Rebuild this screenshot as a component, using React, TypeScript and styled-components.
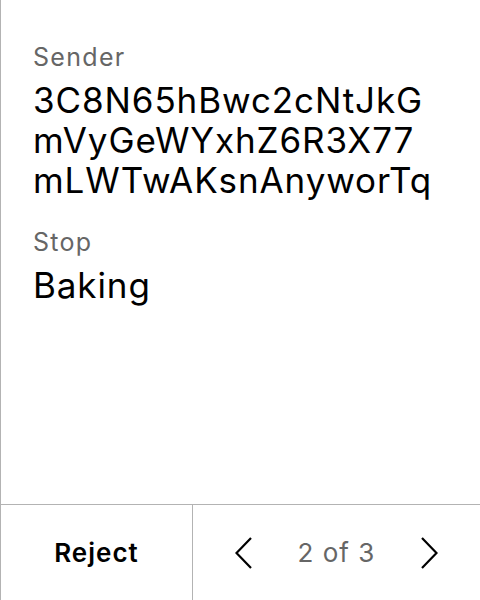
import React from "react";
import styled, { createGlobalStyle } from "styled-components";

const Global = createGlobalStyle`
  html, body { margin: 0; padding: 0; background: #fff; }
  body { font-family: Inter, "Noto Sans", sans-serif; }
`;

const Frame = styled.div`
  box-sizing: border-box;
  width: 480px;
  height: 600px;
  border-left: 1px solid #b3b3b3;
  display: flex;
  flex-direction: column;
`;

const Content = styled.div`
  flex: 1;
  padding: 41px 32px 0 32px;
  display: flex;
  flex-direction: column;
  gap: 26px;
`;

const Field = styled.div`
  display: flex;
  flex-direction: column;
  gap: 7px;
`;

const Label = styled.div`
  font-size: 25px;
  line-height: 32px;
  letter-spacing: 1.3px;
  color: #666;
`;

const Value = styled.div`
  font-size: 35px;
  line-height: 40px;
  letter-spacing: 0.9px;
  color: #000;
  white-space: nowrap;
`;

const Footer = styled.div`
  height: 96px;
  border-top: 1px solid #b3b3b3;
  display: flex;
  box-sizing: border-box;
`;

const RejectButton = styled.button`
  width: 192px;
  border: none;
  border-right: 1px solid #b3b3b3;
  background: none;
  font-family: inherit;
  font-size: 26px;
  font-weight: 600;
  letter-spacing: 1px;
  color: #000;
  padding: 0;
`;

const Pager = styled.div`
  flex: 1;
  display: flex;
  align-items: center;
  justify-content: space-between;
  padding: 0 42px;
`;

const NavButton = styled.button`
  border: none;
  background: none;
  padding: 0;
  width: 17px;
  height: 32px;
  display: flex;
  align-items: center;
  justify-content: center;
`;

const PageText = styled.span`
  font-size: 26px;
  letter-spacing: 1px;
  color: #666;
`;

const Chevron = ({ dir }: { dir: "left" | "right" }) => (
  <svg width="17" height="32" viewBox="0 0 17 32" fill="none">
    <path
      d={dir === "left" ? "M16 1 L1.5 16 L16 31" : "M1 1 L15.5 16 L1 31"}
      stroke="#000"
      strokeWidth="2.2"
    />
  </svg>
);

export default function App() {
  return (
    <>
      <Global />
      <Frame>
        <Content>
          <Field>
            <Label>Sender</Label>
            <Value>
              3C8N65hBwc2cNtJkG
              <br />
              mVyGeWYxhZ6R3X77
              <br />
              mLWTwAKsnAnyworTq
            </Value>
          </Field>
          <Field>
            <Label>Stop</Label>
            <Value>Baking</Value>
          </Field>
        </Content>
        <Footer>
          <RejectButton>Reject</RejectButton>
          <Pager>
            <NavButton aria-label="Previous">
              <Chevron dir="left" />
            </NavButton>
            <PageText>2 of 3</PageText>
            <NavButton aria-label="Next">
              <Chevron dir="right" />
            </NavButton>
          </Pager>
        </Footer>
      </Frame>
    </>
  );
}
